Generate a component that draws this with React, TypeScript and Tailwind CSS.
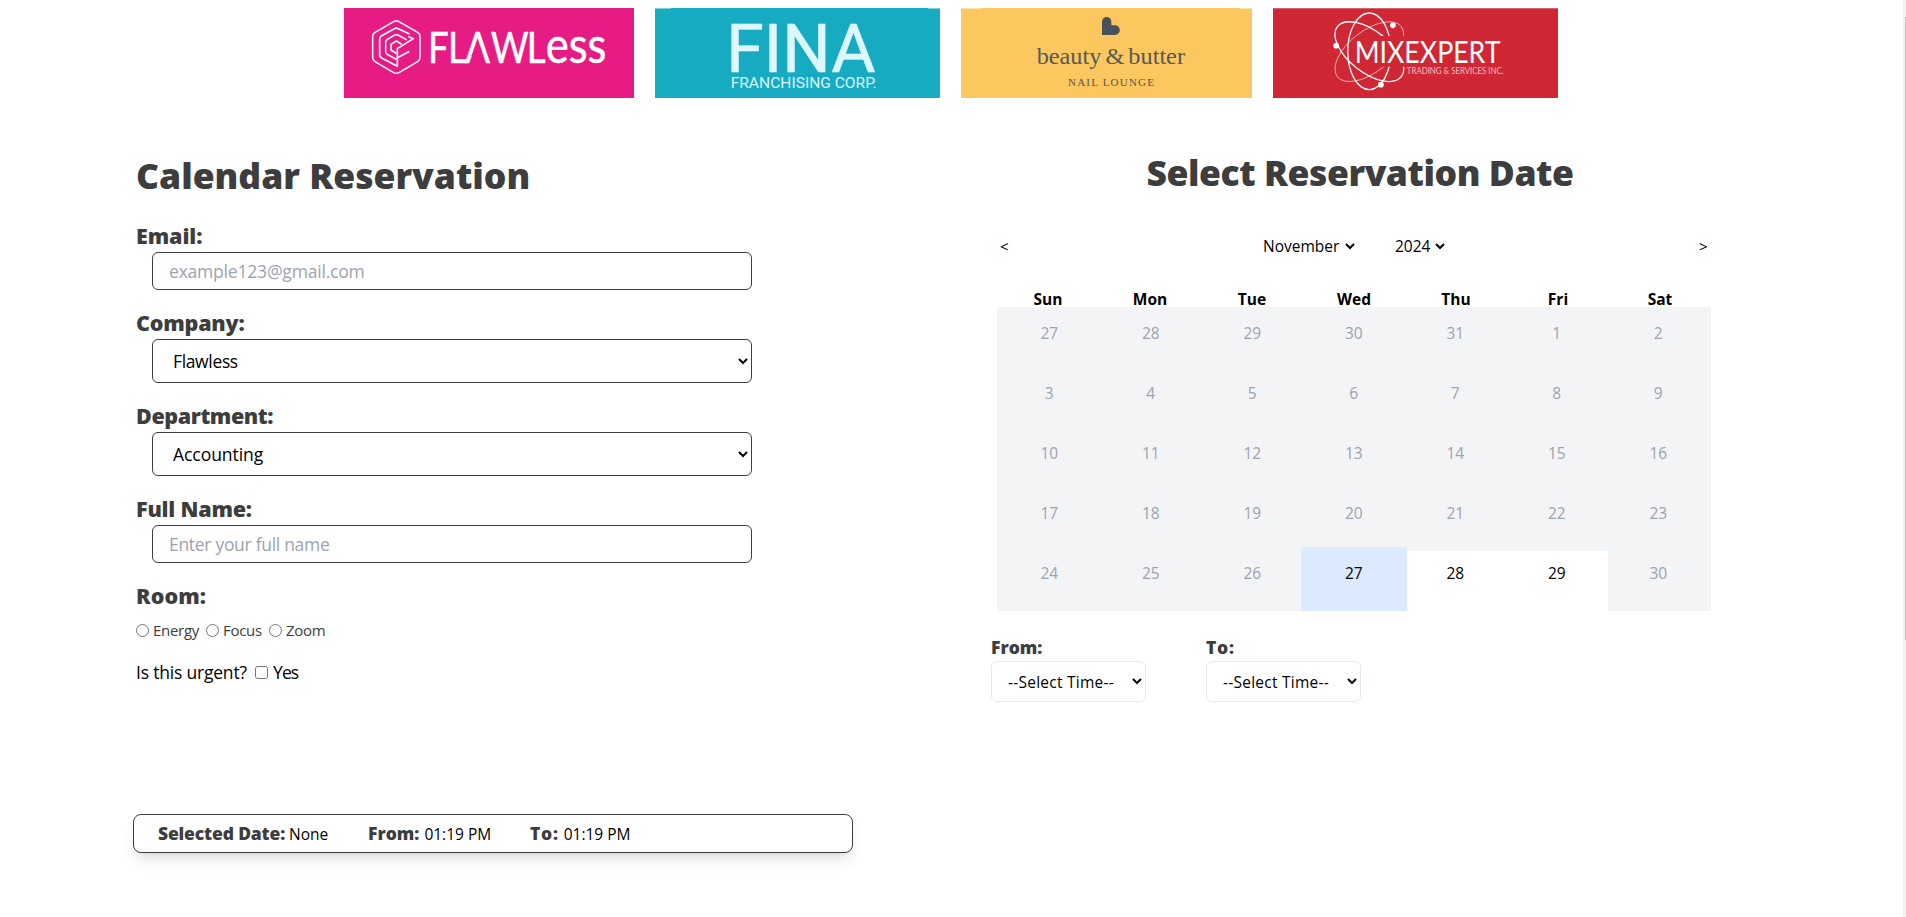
import React from 'react';

const LABEL = 'block h-7 text-[21.5px] leading-7 font-extrabold text-[#3d3d3d]';
const FIELD = 'ml-4 mt-0.5 block w-[600px] rounded-md border border-[#3d3d3d] bg-white text-[17.5px]';

const WEEKDAYS = ['Sun', 'Mon', 'Tue', 'Wed', 'Thu', 'Fri', 'Sat'];
const DAYS = [27, 28, 29, 30, 31, ...Array.from({ length: 30 }, (_, i) => i + 1)];

function FlawlessLogo() {
  return (
    <svg className="block h-[90px] w-[290px]" viewBox="27 24 870 270" preserveAspectRatio="none">
      <rect x="27" y="24" width="870" height="270" fill="#e61b84" />
      <g fill="none" stroke="#fff" strokeLinejoin="round" strokeLinecap="round">
        <path strokeWidth="4.5" d="M176 65Q184 60 192 65L248 97Q255 101 255 110V172Q255 181 248 185L192 218Q184 222 176 218L120 185Q113 181 113 172V110Q113 101 120 97Z" />
        <path strokeWidth="5" d="M222 101L190 86Q184 83 178 86L140 107Q134 110 134 117V165Q134 171 140 174L187 199V146L235 116L222 110" />
        <path strokeWidth="4.5" d="M214 119L189 105Q184 103 179 105L157 118Q152 121 152 126V155Q152 160 157 163L182 177" />
        <path strokeWidth="4.5" d="M199 132L184 123L168 133V150L182 159" />
        <path strokeWidth="5" d="M190 172L221 155" />
      </g>
      <g fill="#fff" stroke="#fff" strokeWidth="1.500" className="font-[Lato]">
        <text transform="scale(0.87 1)" x="320.7 389.7 449 537 661" y="188" fontSize="126">FLAWL</text>
        <text x="632" y="188" fontSize="148" textLength="182" lengthAdjust="spacingAndGlyphs">ess</text>
      </g>
      <path d="M419 142H436L446 168H409Z" fill="#e61b84" />
    </svg>
  );
}

function FinaLogo() {
  return (
    <svg className="block h-[90px] w-[285px]" viewBox="30 24 855 270" preserveAspectRatio="none">
      <rect x="30" y="24" width="855" height="270" fill="#17abc1" />
      <path d="M30 25.500H78M848 25.500H885" stroke="#7fd0dc" strokeWidth="3" />
      <g fill="#dcf7fd" className="font-[Roboto]">
        <text x="244" y="216" fontSize="202" textLength="448" lengthAdjust="spacingAndGlyphs" stroke="#dcf7fd" strokeWidth="2">FINA</text>
        <text x="257" y="263" fontSize="46" textLength="438" lengthAdjust="spacingAndGlyphs">FRANCHISING CORP.</text>
      </g>
    </svg>
  );
}

function BeautyLogo() {
  return (
    <svg className="block h-[90px] w-[291px]" viewBox="33 24 873 270" preserveAspectRatio="none">
      <rect x="33" y="24" width="873" height="270" fill="#fcc75f" />
      <path d="M33 25.500H96M867 25.500H906" stroke="#fde0a5" strokeWidth="3" />
      <path fill="#48525a" d="M456 105V65A14 14 0 0 1 484 65V76H495A14.500 14.500 0 0 1 495 105Z" />
      <g fill="#555a57" className="font-['Liberation_Serif']">
        <text x="260" y="192" fontSize="72" textLength="445" lengthAdjust="spacingAndGlyphs" wordSpacing="-6">beauty &amp; butter</text>
        <text x="354" y="258" fontSize="33" textLength="258">NAIL LOUNGE</text>
      </g>
    </svg>
  );
}

function MixexpertLogo() {
  return (
    <svg className="block h-[90px] w-[285px]" viewBox="36 24 858 270" preserveAspectRatio="none">
      <rect x="36" y="24" width="858" height="270" fill="#cf2733" />
      <path d="M36 25.500H894" stroke="#dc6068" strokeWidth="3" />
      <g fill="none" stroke="#fff">
        <ellipse cx="326" cy="154" rx="65" ry="115" strokeWidth="4" />
        <ellipse cx="326" cy="155" rx="122" ry="62" strokeWidth="4" transform="rotate(38 326 155)" />
        <ellipse cx="326" cy="155" rx="122" ry="62" strokeWidth="2.500" strokeOpacity="0.7" transform="rotate(-38 326 155)" />
      </g>
      <rect x="286" y="108" width="160" height="92" fill="#cf2733" />
      <g fill="#fff">
        <circle cx="397" cy="76" r="8.500" />
        <circle cx="226" cy="137" r="8.500" />
        <circle cx="361" cy="254" r="8.500" />
        <g className="font-[Lato]">
          <text x="282" y="190" fontSize="95" textLength="439" lengthAdjust="spacingAndGlyphs">MIXEXPERT</text>
          <text x="439" y="223" fontSize="28" textLength="291" lengthAdjust="spacingAndGlyphs" fillOpacity="0.7">TRADING &amp; SERVICES INC.</text>
        </g>
      </g>
    </svg>
  );
}

function Day({ day, index }: { day: number; index: number }) {
  const base = 'text-center text-[15.5px] leading-[22px]';
  if (index === 31) {
    return <div className={`${base} relative z-10 -mt-1 -mr-0.5 -ml-0.5 h-16 bg-[#dbeafe] pt-[15px] text-black`}>{day}</div>;
  }
  if (index === 32 || index === 33) {
    return <div className={`${base} h-[60px] bg-white pt-[11px] text-black`}>{day}</div>;
  }
  return <div className={`${base} h-[60px] pt-[11px] text-[#9ca3af]`}>{day}</div>;
}

function TimeSelect({ label, spacing }: { label: string; spacing: string }) {
  return (
    <div>
      <label className={`block h-[22px] text-[17.5px] leading-[22px] font-extrabold text-[#3d3d3d] ${spacing}`}>{label}</label>
      <select className="mt-[3px] block h-[41px] w-[155px] rounded-md border border-[#e5e7eb] bg-white px-3 text-[15.5px] tracking-[0.25px] text-black">
        <option>--Select Time--</option>
      </select>
    </div>
  );
}

export default function App() {
  return (
    <div className="flex h-[917px] w-full overflow-hidden bg-white font-['Open_Sans',sans-serif] text-black">
      <main className="flex-1">
        <header className="flex pt-2 pl-[344px]">
          <FlawlessLogo />
          <div className="ml-[21px]"><FinaLogo /></div>
          <div className="ml-[21px]"><BeautyLogo /></div>
          <div className="ml-[21px]"><MixexpertLogo /></div>
        </header>

        <div className="flex">
          <section className="w-[991px] pt-[57px] pl-[136px]">
            <h1 className="h-10 text-[35.5px] leading-10 font-extrabold text-[#3d3d3d]">Calendar Reservation</h1>

            <div className="mt-[27px]">
              <label className={`${LABEL} tracking-[-0.1px]`}>Email:</label>
              <input className={`${FIELD} h-[38px] px-4 tracking-[-0.2px] placeholder:text-[#9ca3af]`} placeholder="example123@gmail.com" />
            </div>
            <div className="mt-[19px]">
              <label className={`${LABEL} tracking-[-0.2px]`}>Company:</label>
              <select className={`${FIELD} h-11 px-4 tracking-[-0.35px]`}><option>Flawless</option></select>
            </div>
            <div className="mt-[19px]">
              <label className={`${LABEL} tracking-[-0.4px]`}>Department:</label>
              <select className={`${FIELD} h-11 px-4 tracking-[-0.05px]`}><option>Accounting</option></select>
            </div>
            <div className="mt-[19px]">
              <label className={`${LABEL} tracking-[-0.2px]`}>Full Name:</label>
              <input className={`${FIELD} h-[38px] px-4 tracking-[-0.3px] placeholder:text-[#9ca3af]`} placeholder="Enter your full name" />
            </div>
            <div className="mt-[19px]">
              <span className={`${LABEL} tracking-[0.1px]`}>Room:</span>
              <div className="mt-[9px] flex h-[22px] items-center text-[15px] leading-[22px] tracking-[-0.3px] text-[#3d3d3d]">
                <input type="radio" name="room" className="m-0 size-[13px]" />
                <span className="ml-1 w-[53px]">Energy</span>
                <input type="radio" name="room" className="m-0 size-[13px]" />
                <span className="ml-1 w-[46px]">Focus</span>
                <input type="radio" name="room" className="m-0 size-[13px]" />
                <span className="ml-1">Zoom</span>
              </div>
            </div>
            <div className="mt-[18px] flex h-[26px] items-center text-[17.5px] leading-[26px] tracking-[-0.2px]">
              <span className="w-[119px]">Is this urgent?</span>
              <input type="checkbox" className="m-0 size-[13px]" />
              <span className="ml-[5px] tracking-[-0.9px]">Yes</span>
            </div>
          </section>

          <section className="w-[738px] pt-[54px]">
            <h2 className="h-10 text-center text-[35.5px] leading-10 font-extrabold tracking-[-0.45px] text-[#3d3d3d]">Select Reservation Date</h2>

            <div className="mt-[42px] flex h-6 items-center pl-[9px] text-[15.5px]">
              <button className="w-[12px] text-left text-[15px] leading-6">&lt;</button>
              <div className="ml-[247px] flex gap-[33px]">
                <select className="h-6 w-[99px] bg-white"><option>November</option></select>
                <select className="h-6 w-[57px] bg-white"><option>2024</option></select>
              </div>
              <button className="ml-[251px] w-[12px] text-left text-[15px] leading-6">&gt;</button>
            </div>

            <div className="mt-[33px] ml-[6px] w-[714px]">
              <div className="grid h-4 grid-cols-7 text-center text-[15.5px] leading-4 font-bold">
                {WEEKDAYS.map((name) => <div key={name}>{name}</div>)}
              </div>
              <div className="grid h-[304px] grid-cols-[repeat(7,101.5px)] content-start bg-[#f3f4f6] pt-1 pl-[1.5px]">
                {DAYS.map((day, index) => <Day key={index} day={day} index={index} />)}
              </div>
            </div>

            <div className="mt-[25px] flex gap-[60px]">
              <TimeSelect label="From:" spacing="tracking-normal" />
              <TimeSelect label="To:" spacing="tracking-[0.7px]" />
            </div>
          </section>
        </div>

        <div className="mt-[112px] ml-[133px] flex h-[39px] w-[720px] items-center rounded-lg border border-[#3d3d3d] bg-white pl-6 text-[15.5px] shadow-lg">
          <div className="w-[210px]"><b className="text-[17.5px] font-extrabold tracking-[-0.15px] text-[#3d3d3d]">Selected Date:</b> None</div>
          <div className="w-[162px]"><b className="mr-px text-[17.5px] font-extrabold text-[#3d3d3d]">From:</b> 01:19 PM</div>
          <div><b className="mr-px text-[17.5px] font-extrabold tracking-[0.7px] text-[#3d3d3d]">To:</b> 01:19 PM</div>
        </div>
      </main>
      <div className="h-full w-[3px] bg-[#f1f1f1] pt-[17px]">
        <div className="ml-auto h-[623px] w-px bg-[#c1c1c1]" />
      </div>
    </div>
  );
}
